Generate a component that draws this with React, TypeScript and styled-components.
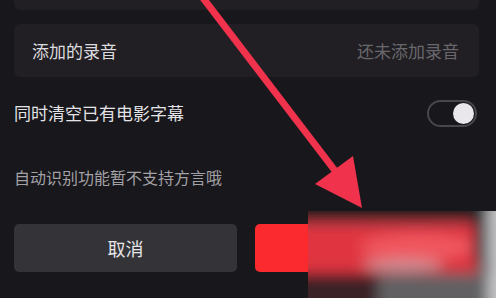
import React from "react";
import styled, { createGlobalStyle } from "styled-components";

const Global = createGlobalStyle`
  html, body { margin: 0; padding: 0; background: #18171b; }
  body { font-family: "Noto Sans CJK SC", "Noto Sans", sans-serif; overflow: hidden; }
  #root { width: 496px; height: 298px; }
`;

const Page = styled.div`
  position: relative;
  width: 496px;
  height: 298px;
  box-sizing: border-box;
  padding: 0 17px 0 14px;
  background: #18171b;
  overflow: hidden;
`;

const Card = styled.div<{ $h: number; $cut?: boolean }>`
  height: ${(p) => p.$h}px;
  background: #211f23;
  border-radius: ${(p) => (p.$cut ? "0 0 6px 6px" : "6px")};
  box-sizing: border-box;
  display: flex;
  align-items: center;
  justify-content: space-between;
  padding: 0 20px 0 18px;
`;

const RowLabel = styled.span`
  font-size: 17px;
  color: #dcdbdf;
  line-height: 1;
`;

const RowValue = styled.span`
  font-size: 17px;
  color: #68676c;
  line-height: 1;
`;

const ToggleRow = styled.div`
  margin-top: 23px;
  height: 27px;
  display: flex;
  align-items: center;
  justify-content: space-between;
  padding-right: 2px;
`;

const ToggleLabel = styled.span`
  font-size: 17px;
  color: #e4e3e7;
  line-height: 1;
  margin-top: -2px;
`;

const Track = styled.div`
  width: 50px;
  height: 27px;
  box-sizing: border-box;
  border: 2px solid #48474c;
  border-radius: 14px;
  display: flex;
  align-items: center;
  justify-content: flex-end;
  padding-right: 1px;
`;

const Knob = styled.div`
  width: 21px;
  height: 21px;
  border-radius: 50%;
  background: #e9e7ec;
`;

const Hint = styled.div`
  margin-top: 40px;
  font-size: 16px;
  line-height: 20px;
  color: #a2a1a6;
`;

const Buttons = styled.div`
  margin-top: 37px;
  display: grid;
  grid-template-columns: 223px 223px;
  column-gap: 18px;
`;

const Btn = styled.div<{ $primary?: boolean }>`
  height: 48px;
  border-radius: 5px;
  background: ${(p) => (p.$primary ? "#fb2a2e" : "#343337")};
  color: #e6e5e9;
  font-size: 18px;
  display: flex;
  align-items: center;
  justify-content: center;
`;

const Overlay = styled.svg`
  position: absolute;
  left: 0;
  top: 0;
  pointer-events: none;
`;

const BlurBox = styled.svg`
  position: absolute;
  left: 308px;
  top: 211px;
  pointer-events: none;
`;

export default function App() {
  return (
    <>
      <Global />
      <Page>
        <Card $h={10} $cut />
        <Card $h={53} style={{ marginTop: 14 }}>
          <RowLabel>添加的录音</RowLabel>
          <RowValue>还未添加录音</RowValue>
        </Card>
        <ToggleRow>
          <ToggleLabel>同时清空已有电影字幕</ToggleLabel>
          <Track>
            <Knob />
          </Track>
        </ToggleRow>
        <Hint>自动识别功能暂不支持方言哦</Hint>
        <Buttons>
          <Btn>取消</Btn>
          <Btn $primary />
        </Buttons>

        <BlurBox width="188" height="87" viewBox="0 0 188 87">
          <defs>
            <filter id="bl" filterUnits="userSpaceOnUse" x="-60" y="-60" width="320" height="220">
              <feGaussianBlur stdDeviation="7" />
            </filter>
          </defs>
          <rect x="0" y="0" width="188" height="87" fill="#58575a" />
          <g filter="url(#bl)">
            <rect x="-40" y="-40" width="280" height="50" fill="#1c1a1d" />
            <rect x="-40" y="60" width="110" height="60" fill="#3a2426" />
            <rect x="70" y="64" width="110" height="60" fill="#626164" />
            <rect x="-40" y="12" width="210" height="50" fill="#e0343f" />
            <ellipse cx="110" cy="36" rx="58" ry="13" fill="#f0565e" />
            <ellipse cx="95" cy="54" rx="40" ry="7" fill="#d48a90" />
            <rect x="166" y="-20" width="10" height="70" fill="#2c2b2e" />
            <rect x="180" y="-10" width="40" height="120" fill="#c6c6c8" />
          </g>
        </BlurBox>

        <Overlay width="496" height="298" viewBox="0 0 496 298">
          <line x1="200" y1="-6" x2="336" y2="172" stroke="#f0324c" strokeWidth="7" />
          <polygon points="315,184 353,156 362,208" fill="#f0324c" />
        </Overlay>
      </Page>
    </>
  );
}
